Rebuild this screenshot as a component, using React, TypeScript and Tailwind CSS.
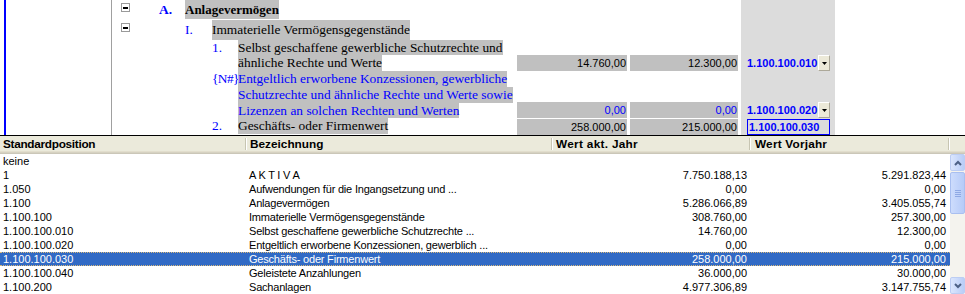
import React from "react";

const serif = "font-['Liberation_Serif','Times_New_Roman',serif]";
const sans = "font-['Liberation_Sans',Arial,sans-serif]";

function MinusBox() {
  return (
    <div className="w-[9px] h-[9px] border border-[#9a9a9a] bg-white flex items-center justify-center">
      <div className="w-[5px] h-[2px] bg-black" />
    </div>
  );
}

function DropBtn() {
  return (
    <div className="w-[12px] h-[16px] bg-[#ece9d8] border-t border-l border-white border-b border-r border-b-[#aca899] border-r-[#aca899] flex items-center justify-center">
      <svg width="5" height="3" viewBox="0 0 5 3">
        <polygon points="0,0 5,0 2.5,3" fill="#000" />
      </svg>
    </div>
  );
}

function Line({ children, h, cls = "" }: { children: React.ReactNode; h: number; cls?: string }) {
  return (
    <div style={{ height: h, lineHeight: `${h}px` }} className="whitespace-nowrap">
      <span className={`bg-[#c0c0c0] inline-block ${cls}`} style={{ height: h }}>
        {children}
      </span>
    </div>
  );
}

function ValCell({ w, children, blue }: { w: string; children?: React.ReactNode; blue?: boolean }) {
  return (
    <div
      className={`${w} h-[16px] bg-[#c0c0c0] text-right pr-[1px] leading-[16px] text-[11px] ${sans} ${
        blue ? "text-[#0000ff]" : "text-black"
      }`}
    >
      {children}
    </div>
  );
}

function CodeCol({ h, code, mode }: { h: number; code?: string; mode?: "drop" | "box" }) {
  return (
    <div style={{ height: h }} className="w-[94px] bg-[#dcdcdc] flex items-end">
      {code && mode === "drop" && (
        <div className="flex items-center h-[16px] pl-[6px]">
          <span className={`w-[71px] text-[11px] font-bold text-[#0000ff] leading-[16px] ${sans}`}>{code}</span>
          <DropBtn />
        </div>
      )}
      {code && mode === "box" && (
        <div className="ml-[6px] w-[83px] h-[16px] border border-[#0000ff] flex items-center">
          <span className={`pl-[1px] text-[11px] font-bold text-[#0000ff] leading-[14px] ${sans}`}>{code}</span>
        </div>
      )}
    </div>
  );
}

function Values({ h, v1, v2, blue, code, mode }: { h: number; v1?: string; v2?: string; blue?: boolean; code?: string; mode?: "drop" | "box" }) {
  return (
    <div className="flex items-end" style={{ height: h }}>
      <div className="w-[110px]">{v1 !== undefined && <ValCell w="w-[110px]" blue={blue}>{v1}</ValCell>}</div>
      <div className="w-[3px]" />
      <div className="w-[108px]">{v2 !== undefined && <ValCell w="w-[108px]" blue={blue}>{v2}</ValCell>}</div>
      <div className="w-[3px]" />
      <CodeCol h={h} code={code} mode={mode} />
    </div>
  );
}

const listRows = [
  ["keine", "", "", ""],
  ["1", "A K T I V A", "7.750.188,13", "5.291.823,44"],
  ["1.050", "Aufwendungen für die Ingangsetzung und ...", "0,00", "0,00"],
  ["1.100", "Anlagevermögen", "5.286.066,89", "3.405.055,74"],
  ["1.100.100", "Immaterielle Vermögensgegenstände", "308.760,00", "257.300,00"],
  ["1.100.100.010", "Selbst geschaffene gewerbliche Schutzrechte ...", "14.760,00", "12.300,00"],
  ["1.100.100.020", "Entgeltlich erworbene Konzessionen, gewerblich ...", "0,00", "0,00"],
  ["1.100.100.030", "Geschäfts- oder Firmenwert", "258.000,00", "215.000,00"],
  ["1.100.100.040", "Geleistete Anzahlungen", "36.000,00", "30.000,00"],
  ["1.100.200", "Sachanlagen", "4.977.306,89", "3.147.755,74"],
];

function HeaderDivider() {
  return (
    <div className="flex h-[12px] mt-[2px]">
      <div className="w-[1px] bg-[#c7c5b2]" />
      <div className="w-[1px] bg-white" />
    </div>
  );
}

function Chevron({ up }: { up?: boolean }) {
  return (
    <svg width="8" height="6" viewBox="0 0 8 6">
      <polyline
        points={up ? "1,5 4,2 7,5" : "1,1 4,4 7,1"}
        fill="none"
        stroke="#4d6185"
        strokeWidth="2"
      />
    </svg>
  );
}

export default function App() {
  return (
    <div className={`w-[965px] h-[294px] overflow-hidden bg-white ${sans}`}>
      {/* Top pane */}
      <div className="flex h-[136px] border-b border-black">
        <div className="w-[112px] h-full border-r border-[#a0a0a0] flex">
          <div className="ml-[4px] w-[2px] h-full bg-[#0000ff]" />
        </div>
        <div className={`flex flex-col text-[13.4px] ${serif}`}>
          {/* Row 1 */}
          <div className="flex h-[20px]">
            <div className="w-[405px] flex">
              <div className="w-[47px] pl-[9px] pt-[3px]">
                <MinusBox />
              </div>
              <div className="w-[26px] font-bold text-[#0000ff] leading-[19px]">A.</div>
              <div>
                <Line h={19} cls="font-bold text-[13px]">Anlagevermögen</Line>
              </div>
            </div>
            <Values h={20} />
          </div>
          {/* Row 2 */}
          <div className="flex h-[20px]">
            <div className="w-[405px] flex">
              <div className="w-[73px] pl-[9px] pt-[3px]">
                <MinusBox />
              </div>
              <div className="w-[27px] text-[#0000ff] leading-[20px]">I.</div>
              <div>
                <Line h={20}>Immaterielle Vermögensgegenstände</Line>
              </div>
            </div>
            <Values h={20} />
          </div>
          {/* Row 3 */}
          <div className="flex h-[31px]">
            <div className="w-[405px] flex">
              <div className="w-[100px]" />
              <div className="w-[26px] text-[#0000ff] leading-[15px]">1.</div>
              <div>
                <Line h={15}>Selbst geschaffene gewerbliche Schutzrechte und</Line>
                <Line h={16}>ähnliche Rechte und Werte</Line>
              </div>
            </div>
            <Values h={31} v1="14.760,00" v2="12.300,00" code="1.100.100.010" mode="drop" />
          </div>
          {/* Row 4 */}
          <div className="flex h-[47px]">
            <div className="w-[405px] flex">
              <div className="w-[100px]" />
              <div className="w-[26px] text-[#0000ff] leading-[16px] whitespace-nowrap tracking-[-0.6px]">{"{N#}"}</div>
              <div className="text-[#0000ff]">
                <Line h={16}>Entgeltlich erworbene Konzessionen, gewerbliche</Line>
                <Line h={16}>Schutzrechte und ähnliche Rechte und Werte sowie</Line>
                <Line h={15}>Lizenzen an solchen Rechten und Werten</Line>
              </div>
            </div>
            <Values h={47} v1="0,00" v2="0,00" blue code="1.100.100.020" mode="drop" />
          </div>
          {/* Row 5 */}
          <div className="flex h-[17px]">
            <div className="w-[405px] flex">
              <div className="w-[100px]" />
              <div className="w-[26px] text-[#0000ff] leading-[16px]">2.</div>
              <div>
                <Line h={16}>Geschäfts- oder Firmenwert</Line>
              </div>
            </div>
            <Values h={17} v1="258.000,00" v2="215.000,00" code="1.100.100.030" mode="box" />
          </div>
        </div>
      </div>

      {/* Header */}
      <div className="bg-[#ebeadb]">
        <div className="flex h-[15px] text-[11.8px] font-bold text-black leading-[16px]">
          <div className="w-[245px] pl-[3px] tracking-[-0.3px]">Standardposition</div>
          <HeaderDivider />
          <div className="w-[304px] pl-[3px]">Bezeichnung</div>
          <HeaderDivider />
          <div className="w-[196px] pl-[3px] tracking-[0.3px]">Wert akt. Jahr</div>
          <HeaderDivider />
          <div className="w-[197px] pl-[4px] tracking-[0.2px]">Wert Vorjahr</div>
          <HeaderDivider />
          <div className="flex-1" />
        </div>
        <div className="h-[1px] bg-[#e2decd]" />
        <div className="h-[1px] bg-[#d6d2c2]" />
        <div className="h-[1px] bg-[#cbc7b8]" />
      </div>

      {/* List */}
      <div className="flex">
        <div className="w-[950px] flex flex-col">
          {listRows.map((r, i) => {
            const sel = i === 7;
            return (
              <div
                key={i}
                className={`flex h-[14px] text-[11px] ${
                  sel
                    ? "bg-[#316ac5] text-white border-y border-dotted border-[#d9b97a] leading-[13px]"
                    : "text-black leading-[15px]"
                }`}
              >
                <div className="w-[246px] pl-[3px] whitespace-nowrap">{r[0]}</div>
                <div className="w-[306px] pl-[3px] whitespace-nowrap tracking-[-0.2px]">{r[1]}</div>
                <div className="w-[198px] pr-[3px] text-right">{r[2]}</div>
                <div className="w-[200px] pr-[4px] text-right">{r[3]}</div>
              </div>
            );
          })}
        </div>
        {/* Scrollbar */}
        <div className="w-[15px] h-[140px] bg-[#f4f3ee] flex flex-col">
          <div className="h-[17px] rounded-[2px] border border-[#bccdf3] bg-linear-to-r from-[#dbe6fd] to-[#b9cdf7] flex items-center justify-center">
            <Chevron up />
          </div>
          <div className="mt-[1px] h-[42px] rounded-[2px] border border-[#a9bff0] bg-linear-to-r from-[#cddcfc] to-[#b6cbf8] flex flex-col items-center justify-center gap-[1px]">
            <div className="w-[6px] h-[1px] bg-[#8fa9e4]" />
            <div className="w-[6px] h-[1px] bg-[#8fa9e4]" />
            <div className="w-[6px] h-[1px] bg-[#8fa9e4]" />
            <div className="w-[6px] h-[1px] bg-[#8fa9e4]" />
          </div>
          <div className="flex-1" />
          <div className="h-[17px] rounded-[2px] border border-[#bccdf3] bg-linear-to-r from-[#dbe6fd] to-[#b9cdf7] flex items-center justify-center">
            <Chevron />
          </div>
        </div>
      </div>
    </div>
  );
}
